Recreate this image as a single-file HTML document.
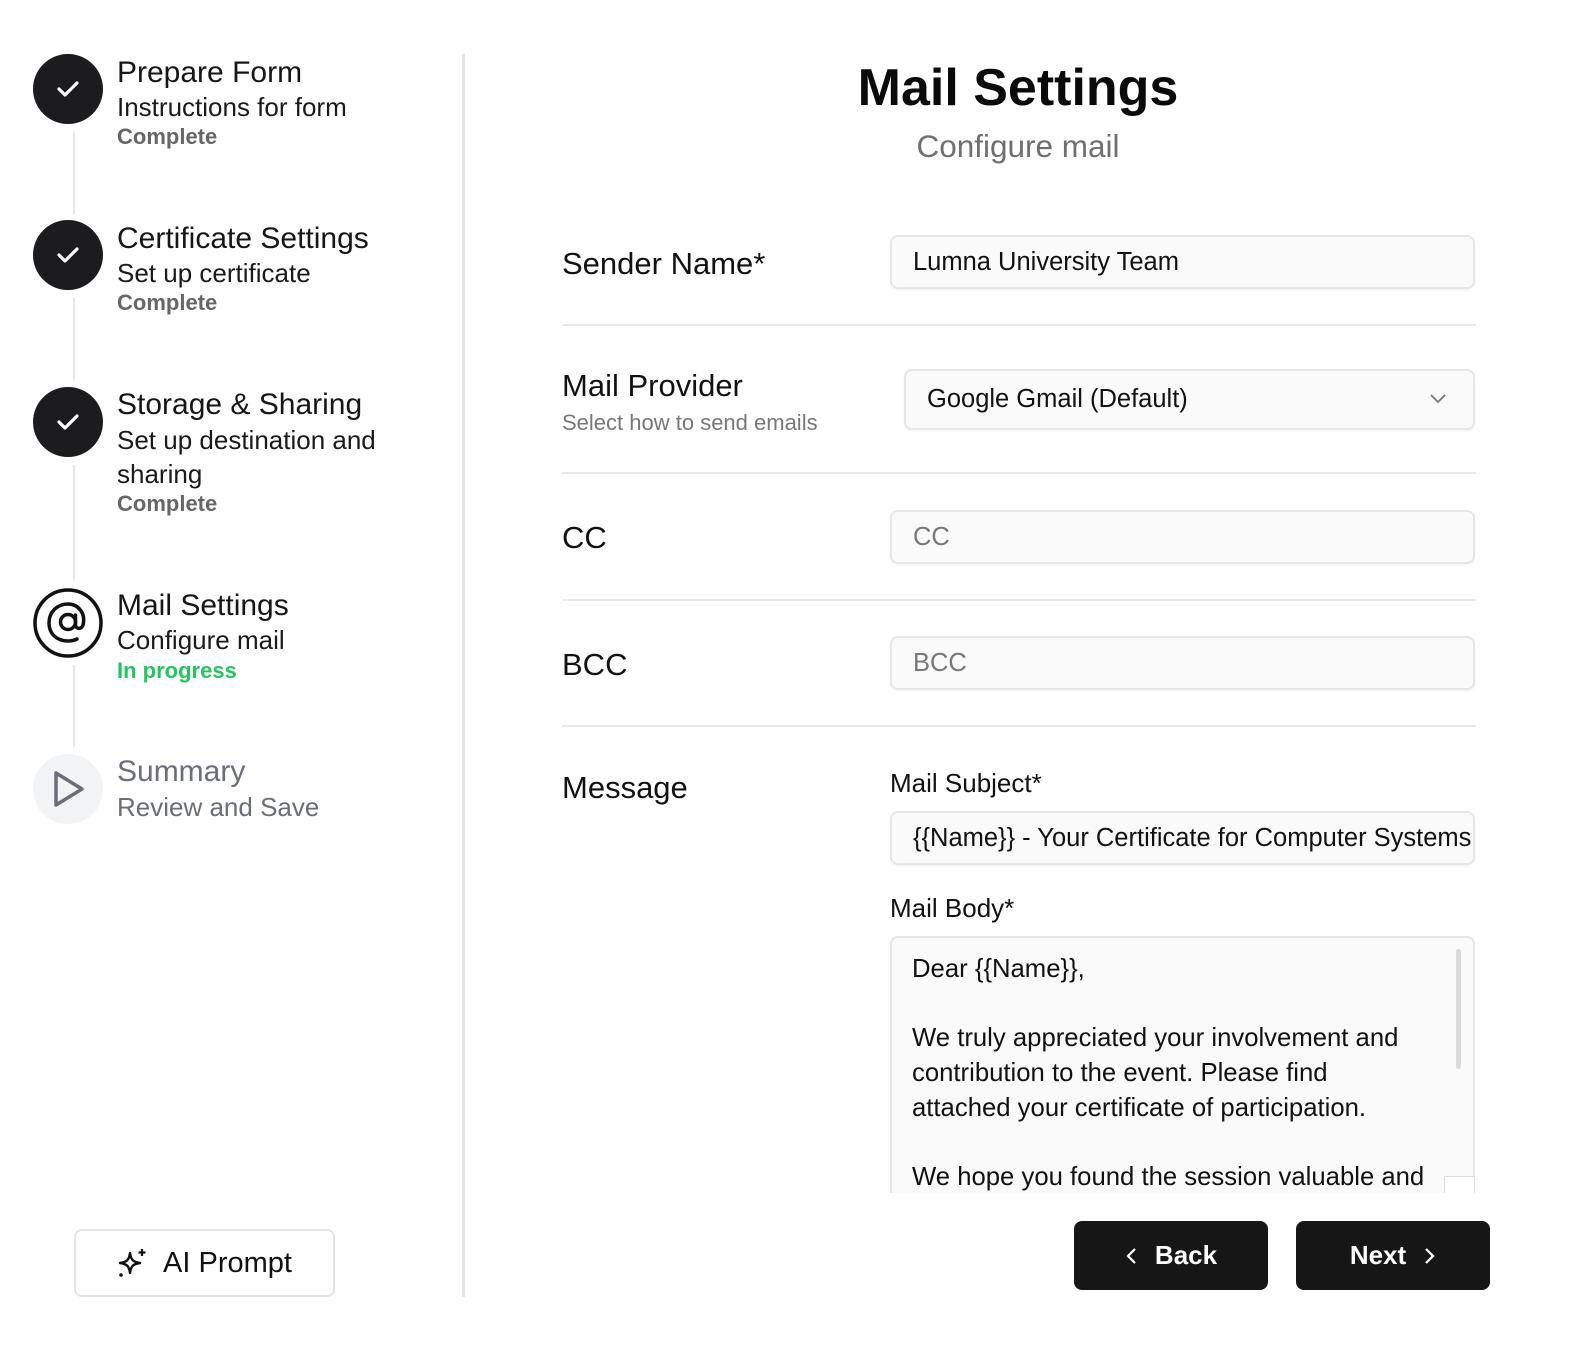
<!DOCTYPE html>
<html><head><meta charset="utf-8"><style>
*{margin:0;padding:0;box-sizing:border-box}
body{width:1584px;height:1361px;background:#fff;font-family:"Liberation Sans",sans-serif;color:#111;position:relative;overflow:hidden}
.a{position:absolute;line-height:1;white-space:nowrap}
.t{font-size:30px;color:#161616}
.s{font-size:26px;color:#1a1a1a}
.c{font-size:22px;font-weight:bold;color:#666}
.vl{position:absolute;left:73px;width:2px;background:#e6e6e6}
.circ{position:absolute;left:33px;width:70px;height:70px;border-radius:50%;background:#1c1c1e}
.lbl{font-size:31px;color:#111}
.inp{position:absolute;left:890px;width:585px;height:54px;background:#fafafa;border:2px solid #e6e6e6;border-radius:8px;box-shadow:0 1px 2px rgba(0,0,0,.06);font-size:25.5px;line-height:50px;padding-left:21px;white-space:nowrap;overflow:hidden;color:#111}
.sep{position:absolute;left:562px;width:914px;height:2px;background:#e8e8e8}
.btn{position:absolute;top:1221px;width:194px;height:69px;background:#161616;border-radius:8px;color:#fff;font-size:26px;font-weight:bold;display:flex;align-items:center;justify-content:center;gap:18px}
</style></head><body>

<div class="circ" style="top:54px"><svg width="70" height="70"><path d="M26 35l6 6 12-12" fill="none" stroke="#fff" stroke-width="3.2" stroke-linecap="round" stroke-linejoin="round"/></svg></div>
<div class="circ" style="top:220px"><svg width="70" height="70"><path d="M26 35l6 6 12-12" fill="none" stroke="#fff" stroke-width="3.2" stroke-linecap="round" stroke-linejoin="round"/></svg></div>
<div class="circ" style="top:387px"><svg width="70" height="70"><path d="M26 35l6 6 12-12" fill="none" stroke="#fff" stroke-width="3.2" stroke-linecap="round" stroke-linejoin="round"/></svg></div>
<svg class="a" style="left:33px;top:588px" width="70" height="70"><circle cx="35" cy="35" r="33" fill="none" stroke="#111" stroke-width="3.5"/><circle cx="35" cy="34" r="7.5" fill="none" stroke="#111" stroke-width="3.5"/><path d="M42.5 27v10c0 4 6 5 7.5 0 3-12-5-21-15-21-11 0-19 8-19 19s8 18 19 18c4 0 7-1 9-2" fill="none" stroke="#111" stroke-width="3.5" stroke-linecap="round"/></svg>
<div class="circ" style="top:754px;background:#f2f3f5"><svg width="70" height="70"><path d="M23 19v32l26-16z" fill="none" stroke="#6b6e78" stroke-width="3.5" stroke-linejoin="round"/></svg></div>

<div class="vl" style="top:132px;height:82px"></div>
<div class="vl" style="top:298px;height:82px"></div>
<div class="vl" style="top:465px;height:115px"></div>
<div class="vl" style="top:665px;height:82px"></div>

<div class="a t" style="left:117px;top:58px">Prepare Form</div>
<div class="a s" style="left:117px;top:94px">Instructions for form</div>
<div class="a c" style="left:117px;top:126px">Complete</div>
<div class="a t" style="left:117px;top:224px">Certificate Settings</div>
<div class="a s" style="left:117px;top:260px">Set up certificate</div>
<div class="a c" style="left:117px;top:292px">Complete</div>
<div class="a t" style="left:117px;top:390px">Storage &amp; Sharing</div>
<div class="a s" style="left:117px;top:427px">Set up destination and</div>
<div class="a s" style="left:117px;top:461px">sharing</div>
<div class="a c" style="left:117px;top:493px">Complete</div>
<div class="a t" style="left:117px;top:591px">Mail Settings</div>
<div class="a s" style="left:117px;top:627px">Configure mail</div>
<div class="a c" style="left:117px;top:660px;color:#22c55e">In progress</div>
<div class="a t" style="left:117px;top:757px;color:#6b6e78">Summary</div>
<div class="a s" style="left:117px;top:794px;color:#6b6e78">Review and Save</div>

<div style="position:absolute;left:74px;top:1229px;width:261px;height:68px;border:2px solid #e4e4e4;border-radius:8px;display:flex;align-items:center;justify-content:center;gap:14px;font-size:29px;color:#111">
<svg width="32" height="32" viewBox="0 0 32 32"><path d="M13 6c1 7 3 9 10 10-7 1-9 3-10 10-1-7-3-9-10-10 7-1 9-3 10-10z" fill="none" stroke="#111" stroke-width="2.4" stroke-linejoin="round"/><path d="M25 2v7M21.5 5.5h7" stroke="#111" stroke-width="2.2"/><circle cx="4" cy="28" r="1.8" fill="#111"/></svg>
<span>AI Prompt</span></div>

<div style="position:absolute;left:462px;top:54px;width:3px;height:1243px;background:#e6e6e6"></div>

<div class="a" style="left:618px;width:800px;text-align:center;top:62px;font-size:52px;font-weight:bold;color:#0a0a0a">Mail Settings</div>
<div class="a" style="left:618px;width:800px;text-align:center;top:131px;font-size:31.5px;color:#6f6f6f">Configure mail</div>

<div class="a lbl" style="left:562px;top:248px">Sender Name*</div>
<div class="inp" style="top:235px">Lumna University Team</div>
<div class="sep" style="top:324px"></div>

<div class="a lbl" style="left:562px;top:370px">Mail Provider</div>
<div class="a" style="left:562px;top:412px;font-size:22px;color:#777">Select how to send emails</div>
<div class="inp" style="left:904px;width:571px;top:369px;height:61px;line-height:57px">Google Gmail (Default)
<svg style="position:absolute;right:26px;top:22px" width="18" height="12"><path d="M2 2l7 7 7-7" fill="none" stroke="#777" stroke-width="1.8"/></svg></div>
<div class="sep" style="top:472px"></div>

<div class="a lbl" style="left:562px;top:522px">CC</div>
<div class="inp" style="top:510px;color:#777">CC</div>
<div class="sep" style="top:599px"></div>

<div class="a lbl" style="left:562px;top:649px">BCC</div>
<div class="inp" style="top:636px;color:#777">BCC</div>
<div class="sep" style="top:725px"></div>

<div class="a lbl" style="left:562px;top:772px">Message</div>
<div class="a" style="left:890px;top:770px;font-size:26px;color:#111">Mail Subject*</div>
<div class="inp" style="top:811px;padding-right:20px">{{Name}} - Your Certificate for Computer Systems</div>
<div class="a" style="left:890px;top:895px;font-size:26px;color:#111">Mail Body*</div>
<div style="position:absolute;left:890px;top:936px;width:585px;height:257px;overflow:hidden">
<div style="position:absolute;left:0;top:0;width:585px;height:300px;background:#fafafa;border:2px solid #e6e6e6;border-radius:8px"></div>
<div style="position:absolute;left:22px;top:16px;font-size:25.7px;line-height:34.7px;color:#111;white-space:nowrap">Dear {{Name}},<br><br>We truly appreciated your involvement and<br>contribution to the event. Please find<br>attached your certificate of participation.<br><br>We hope you found the session valuable and</div>
<div style="position:absolute;left:566px;top:13px;width:5px;height:120px;border-radius:3px;background:#d8dadc"></div>
<div style="position:absolute;left:554px;top:240px;width:31px;height:20px;border:1px solid #ddd;background:#fff"></div>
</div>

<div class="btn" style="left:1074px"><svg width="12" height="20"><path d="M10 3l-7 7 7 7" fill="none" stroke="#fff" stroke-width="2.2"/></svg><span>Back</span></div>
<div class="btn" style="left:1296px"><span>Next</span><svg width="12" height="20"><path d="M2 3l7 7-7 7" fill="none" stroke="#fff" stroke-width="2.2"/></svg></div>
</body></html>
